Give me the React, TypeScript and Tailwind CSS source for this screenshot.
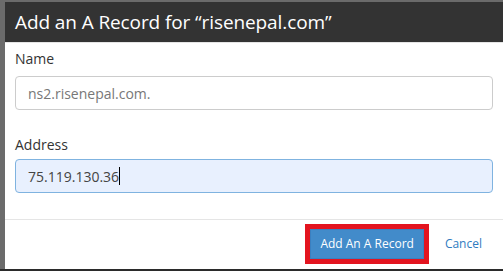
import React from 'react';

/* Add A Record modal (cPanel zone editor style) */

export default function App() {
  return (
    <div
      className="w-[503px] h-[271px] overflow-hidden bg-[#6b6b6b] pl-[5px] pt-[2px] border-b-2 border-[#2b2b2b]"
      style={{ fontFamily: '"Open Sans", "Noto Sans", sans-serif' }}
    >
      <div className="flex flex-col h-[267px] bg-white">
        {/* Header */}
        <div className="h-[41px] bg-[#333333] border-b border-[#e5e5e5] px-[10px] flex items-center">
          <h3 className="text-[19px] leading-none text-white tracking-[-0.1px]">
            Add an A Record for “risenepal.com”
          </h3>
        </div>

        {/* Body */}
        <div className="px-[10px] pt-[6px] pb-[26px] border-b border-[#e5e5e5]">
          <label className="block text-[14px] leading-[20px] text-[#333] mb-[7px]">Name</label>
          <div className="h-[34px] border border-[#cccccc] rounded-[4px] px-[12px] flex items-center text-[14px] text-[#777]">
            ns2.risenepal.com.
          </div>

          <label className="block text-[14px] leading-[20px] text-[#333] mt-[25px] mb-[4px]">Address</label>
          <div className="h-[34px] border border-[#7fb3e0] rounded-[4px] bg-[#e8f0fe] px-[12px] flex items-center text-[14px] text-[#444]">
            <span>75.119.130.36</span>
            <span className="inline-block w-px h-[18px] bg-black" />
          </div>
        </div>

        {/* Footer */}
        <div className="flex items-start justify-end pt-[4px] pr-[21px] gap-[16px]">
          <div className="border-[5px] border-[#e3141f]">
            <button className="h-[30px] px-[9px] bg-[#428bca] text-white text-[12px] border border-[#3a7fc0]">
              Add An A Record
            </button>
          </div>
          <a className="text-[12px] text-[#2f7bbf] leading-[40px] cursor-pointer">Cancel</a>
        </div>
      </div>
    </div>
  );
}
